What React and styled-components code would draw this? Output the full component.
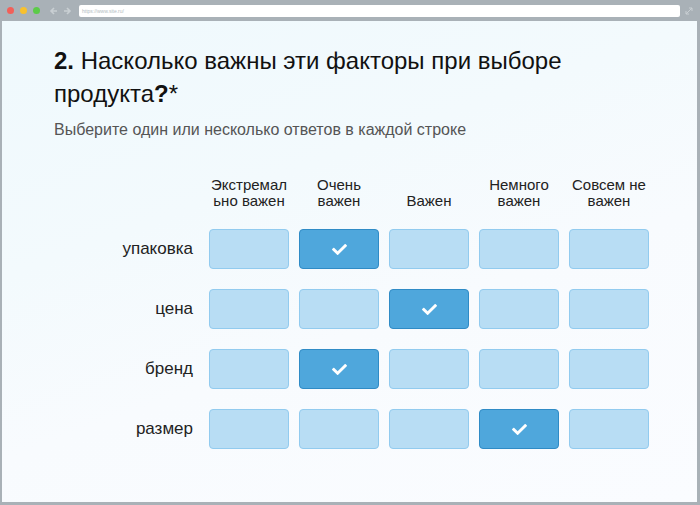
import React from "react";
import styled, { createGlobalStyle } from "styled-components";
import { FaCheck } from "react-icons/fa";

const GlobalStyle = createGlobalStyle`
  html, body {
    margin: 0;
    padding: 0;
    background: #a9b1b7;
  }
  body {
    font-family: "Liberation Sans", Arial, sans-serif;
  }
`;

const colunas = [
  "Экстремально важен",
  "Очень важен",
  "Важен",
  "Немного важен",
  "Совсем не важен",
];

const linhas = [
  { nome: "упаковка", marcado: 1 },
  { nome: "цена", marcado: 2 },
  { nome: "бренд", marcado: 1 },
  { nome: "размер", marcado: 3 },
];

const App = () => {
  return (
    <>
      <GlobalStyle />
      <Janela>
        <BarraTopo>
          <Bolinhas>
            <Bolinha cor="#f26059" />
            <Bolinha cor="#f8c12e" />
            <Bolinha cor="#5ccb48" />
          </Bolinhas>
          <Setas>
            <svg width="10" height="10" viewBox="0 0 10 10">
              <path d="M8 5H2M5 2L2 5l3 3" stroke="#c9cfd3" strokeWidth="1.6" fill="none" />
            </svg>
            <svg width="10" height="10" viewBox="0 0 10 10">
              <path d="M2 5h6M5 2l3 3-3 3" stroke="#c9cfd3" strokeWidth="1.6" fill="none" />
            </svg>
          </Setas>
          <Endereco>https://www.site.ru/</Endereco>
          <Expandir>
            <svg width="8" height="8" viewBox="0 0 8 8">
              <path d="M1 7L7 1M4 1h3v3M1 4v3h3" stroke="#c9cfd3" strokeWidth="1" fill="none" />
            </svg>
          </Expandir>
        </BarraTopo>
        <Conteudo>
          <Titulo>
            <b>2.</b> Насколько важны эти факторы при выборе продукта<b>?</b>*
          </Titulo>
          <Subtitulo>Выберите один или несколько ответов в каждой строке</Subtitulo>
          <Grade>
            <span />
            {colunas.map((c) => (
              <Cabecalho key={c}>{c}</Cabecalho>
            ))}
            {linhas.map((l) => (
              <React.Fragment key={l.nome}>
                <Rotulo>{l.nome}</Rotulo>
                {colunas.map((c, i) => (
                  <Celula key={c} ativo={i === l.marcado}>
                    {i === l.marcado && <FaCheck size={15} color="#fff" />}
                  </Celula>
                ))}
              </React.Fragment>
            ))}
          </Grade>
        </Conteudo>
      </Janela>
    </>
  );
};

export default App;

const Janela = styled.div`
  width: 700px;
  height: 505px;
  box-sizing: border-box;
  padding: 0 3px 3px 2px;
  display: flex;
  flex-direction: column;
  background: #a9b1b7;
`;

const BarraTopo = styled.div`
  height: 21px;
  display: flex;
  align-items: center;
  padding: 0 0 0 5px;
`;

const Bolinhas = styled.div`
  display: flex;
  gap: 6px;
`;

const Bolinha = styled.span`
  width: 7px;
  height: 7px;
  border-radius: 50%;
  background: ${({ cor }) => cor};
`;

const Setas = styled.div`
  display: flex;
  gap: 3px;
  margin-left: 9px;
`;

const Endereco = styled.div`
  margin-left: 7px;
  flex: 1;
  height: 12px;
  background: #fff;
  border-radius: 2px;
  font-size: 5px;
  line-height: 12px;
  color: #b4bcc2;
  padding-left: 3px;
`;

const Expandir = styled.div`
  width: 17px;
  display: flex;
  justify-content: center;
`;

const Conteudo = styled.div`
  flex: 1;
  background: linear-gradient(160deg, #eff9fd 0%, #f3fafd 35%, #f8fbfe 60%, #fafcff 100%);
  padding: 23px 0 0 52px;
  color: #1c1c1c;
`;

const Titulo = styled.h1`
  margin: 0;
  width: 540px;
  font-size: 24px;
  font-weight: 400;
  line-height: 33px;
  color: #111;

  b {
    font-weight: 700;
  }
`;

const Subtitulo = styled.p`
  margin: 10px 0 0;
  font-size: 16px;
  line-height: 20px;
  color: #555;
`;

const Grade = styled.div`
  margin-top: 37px;
  display: grid;
  grid-template-columns: 145px repeat(5, 80px);
  column-gap: 10px;
  row-gap: 20px;
  align-items: end;
`;

const Cabecalho = styled.div`
  font-size: 15px;
  line-height: 16px;
  text-align: center;
  color: #222;
  overflow-wrap: anywhere;
  padding: 0 1px;
`;

const Rotulo = styled.div`
  align-self: center;
  text-align: right;
  padding-right: 6px;
  font-size: 17px;
  color: #222;
`;

const Celula = styled.div`
  height: 40px;
  box-sizing: border-box;
  border-radius: 4px;
  border: 1px solid ${({ ativo }) => (ativo ? "#2f8bc6" : "#92cbef")};
  background: ${({ ativo }) => (ativo ? "#4fa7dc" : "#b8ddf4")};
  display: flex;
  align-items: center;
  justify-content: center;
`;
